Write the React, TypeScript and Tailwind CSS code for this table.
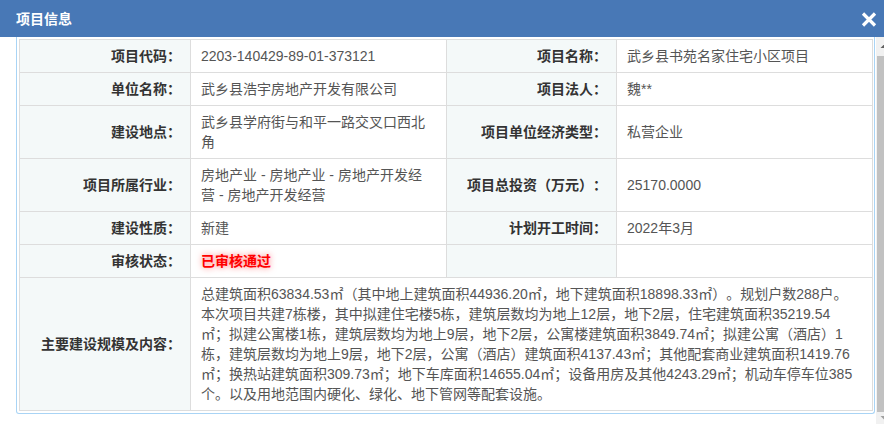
import React from "react";

function Label({ children }: { children?: React.ReactNode }) {
  return (
    <td className="border border-[#dddddd] bg-[#f4f9f9] pl-[8px] pr-[9px] py-[6px] text-right align-middle font-bold text-[#333333]">
      {children}
    </td>
  );
}

function Value({ children, span }: { children?: React.ReactNode; span?: number }) {
  return (
    <td
      colSpan={span}
      className="border border-[#dddddd] bg-white px-[10px] py-[6px] align-middle text-[#555555]"
    >
      {children}
    </td>
  );
}

const scale = [
  "总建筑面积63834.53㎡（其中地上建筑面积44936.20㎡，地下建筑面积18898.33㎡）。规划户数288户。",
  "本次项目共建7栋楼，其中拟建住宅楼5栋，建筑层数均为地上12层，地下2层，住宅建筑面积35219.54",
  "㎡；拟建公寓楼1栋，建筑层数均为地上9层，地下2层，公寓楼建筑面积3849.74㎡；拟建公寓（酒店）1",
  "栋，建筑层数均为地上9层，地下2层，公寓（酒店）建筑面积4137.43㎡；其他配套商业建筑面积1419.76",
  "㎡；换热站建筑面积309.73㎡；地下车库面积14655.04㎡；设备用房及其他4243.29㎡；机动车停车位385",
  "个。以及用地范围内硬化、绿化、地下管网等配套设施。",
];

export default function App() {
  return (
    <div className="w-[884px] h-[424px] overflow-hidden bg-white font-['Liberation_Sans','Noto_Sans_CJK_SC',sans-serif] text-[14px] [text-spacing-trim:space-all]">
      <div className="flex h-[37px] items-center justify-between bg-[#4878b6] pl-[16px] pr-[7px]">
        <span className="font-bold text-white leading-[20px]">项目信息</span>
        <svg width="16" height="15" viewBox="0 0 16 15" className="mt-[1px]">
          <path d="M2 1.5 L14 13.5 M14 1.5 L2 13.5" stroke="#ffffff" strokeWidth="3.2" />
        </svg>
      </div>

      <div className="flex h-[387px]">
        <div className="w-[876px]">
          <div className="ml-[16px] w-[859px] rounded-b-[3px] border border-t-0 border-[#a9d4f5] px-[2px] pt-[2px] pb-[2px]">
            <table className="w-[853px] table-fixed border-collapse leading-[20px]">
              <colgroup>
                <col className="w-[171px]" />
                <col className="w-[256px]" />
                <col className="w-[170px]" />
                <col className="w-[256px]" />
              </colgroup>
              <tbody>
                <tr>
                  <Label>项目代码：</Label>
                  <Value>2203-140429-89-01-373121</Value>
                  <Label>项目名称：</Label>
                  <Value>武乡县书苑名家住宅小区项目</Value>
                </tr>
                <tr>
                  <Label>单位名称：</Label>
                  <Value>武乡县浩宇房地产开发有限公司</Value>
                  <Label>项目法人：</Label>
                  <Value>魏**</Value>
                </tr>
                <tr>
                  <Label>建设地点：</Label>
                  <Value>武乡县学府街与和平一路交叉口西北角</Value>
                  <Label>项目单位经济类型：</Label>
                  <Value>私营企业</Value>
                </tr>
                <tr>
                  <Label>项目所属行业：</Label>
                  <Value>
                    房地产业 - 房地产业 - 房地产开发经
                    <br />营 - 房地产开发经营
                  </Value>
                  <Label>项目总投资（万元）：</Label>
                  <Value>25170.0000</Value>
                </tr>
                <tr>
                  <Label>建设性质：</Label>
                  <Value>新建</Value>
                  <Label>计划开工时间：</Label>
                  <Value>2022年3月</Value>
                </tr>
                <tr>
                  <Label>审核状态：</Label>
                  <Value>
                    <span className="font-bold text-[#ff0000] [text-shadow:0_0_6px_rgba(255,0,0,0.55)]">
                      已审核通过
                    </span>
                  </Value>
                  <Label />
                  <Value />
                </tr>
                <tr>
                  <Label>主要建设规模及内容：</Label>
                  <Value span={3}>
                    {scale.map((line) => (
                      <div key={line} className="whitespace-nowrap">
                        {line}
                      </div>
                    ))}
                  </Value>
                </tr>
              </tbody>
            </table>
          </div>
        </div>

        <div className="flex w-[8px] flex-col bg-[#f1f1f1]">
          <svg width="8" height="19" viewBox="0 0 8 19" className="shrink-0">
            <polygon points="8.5,7 4.5,11 8.5,11" fill="#606060" />
          </svg>
          <div className="ml-[1px] flex-1 bg-[#c1c1c1]" />
          <svg width="8" height="12" viewBox="0 0 8 12" className="shrink-0">
            <polygon points="4.5,4 8.5,4 8.5,8" fill="#a0a0a0" />
          </svg>
        </div>
      </div>
    </div>
  );
}
